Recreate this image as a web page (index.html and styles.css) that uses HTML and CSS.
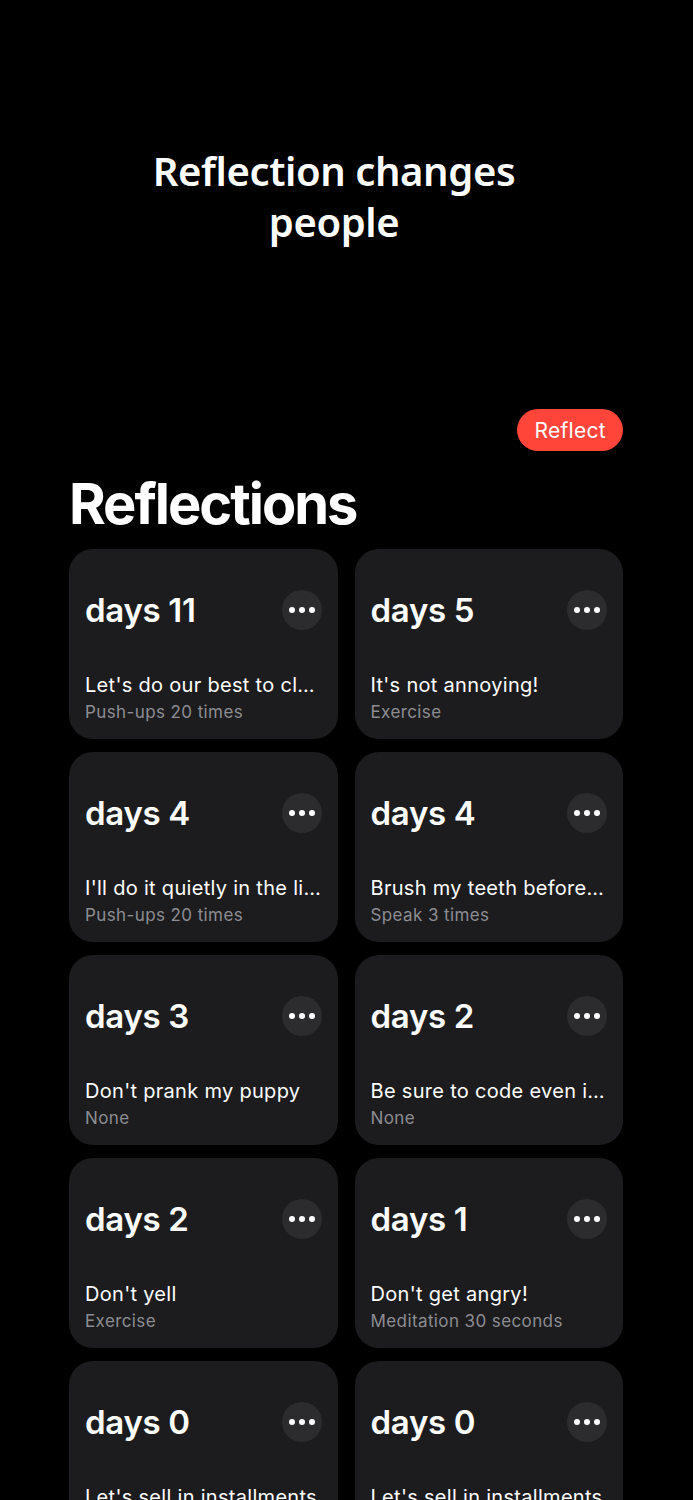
FILE: index.html
```html
<!DOCTYPE html>
<html lang="en">
<head>
<meta charset="utf-8">
<title>Reflections</title>
<link rel="stylesheet" href="styles.css">
</head>
<body>
<div class="page">
  <header class="hero">
    <h1 class="hero-title">Reflection changes people</h1>
  </header>
  <div class="actions">
    <button class="reflect-btn">Reflect</button>
  </div>
  <h2 class="section-title">Reflections</h2>
  <div class="grid">
    <div class="card">
      <div class="card-top"><span class="days">days 11</span><span class="more"><i></i><i></i><i></i></span></div>
      <div class="card-text"><div class="goal">Let's do our best to clean up every day</div><div class="sub">Push-ups 20 times</div></div>
    </div>
    <div class="card">
      <div class="card-top"><span class="days">days 5</span><span class="more"><i></i><i></i><i></i></span></div>
      <div class="card-text"><div class="goal">It's not annoying!</div><div class="sub">Exercise</div></div>
    </div>
    <div class="card">
      <div class="card-top"><span class="days">days 4</span><span class="more"><i></i><i></i><i></i></span></div>
      <div class="card-text"><div class="goal">I'll do it quietly in the library</div><div class="sub">Push-ups 20 times</div></div>
    </div>
    <div class="card">
      <div class="card-top"><span class="days">days 4</span><span class="more"><i></i><i></i><i></i></span></div>
      <div class="card-text"><div class="goal">Brush my teeth beforehand</div><div class="sub">Speak 3 times</div></div>
    </div>
    <div class="card">
      <div class="card-top"><span class="days">days 3</span><span class="more"><i></i><i></i><i></i></span></div>
      <div class="card-text"><div class="goal">Don't prank my puppy</div><div class="sub">None</div></div>
    </div>
    <div class="card">
      <div class="card-top"><span class="days">days 2</span><span class="more"><i></i><i></i><i></i></span></div>
      <div class="card-text"><div class="goal">Be sure to code even if I'm tired</div><div class="sub">None</div></div>
    </div>
    <div class="card">
      <div class="card-top"><span class="days">days 2</span><span class="more"><i></i><i></i><i></i></span></div>
      <div class="card-text"><div class="goal">Don't yell</div><div class="sub">Exercise</div></div>
    </div>
    <div class="card">
      <div class="card-top"><span class="days">days 1</span><span class="more"><i></i><i></i><i></i></span></div>
      <div class="card-text"><div class="goal">Don't get angry!</div><div class="sub">Meditation 30 seconds</div></div>
    </div>
    <div class="card">
      <div class="card-top"><span class="days">days 0</span><span class="more"><i></i><i></i><i></i></span></div>
      <div class="card-text"><div class="goal">Let's sell in installments</div><div class="sub">None</div></div>
    </div>
    <div class="card">
      <div class="card-top"><span class="days">days 0</span><span class="more"><i></i><i></i><i></i></span></div>
      <div class="card-text"><div class="goal">Let's sell in installments</div><div class="sub">None</div></div>
    </div>
  </div>
</div>
</body>
</html>
```

FILE: styles.css
```css
* { box-sizing: border-box; }
html, body {
  margin: 0;
  padding: 0;
  background: #000;
  color: #fff;
  font-family: Inter, "Liberation Sans", sans-serif;
}
.page {
  padding: 0 70px 40px 69px;
}
.hero {
  padding-top: 145px;
}
.hero-title {
  margin: 0 0 0 55px;
  width: 420px;
  text-align: center;
  font-family: "Noto Sans", "Open Sans", sans-serif;
  font-weight: 600;
  font-size: 40px;
  line-height: 51px;
  letter-spacing: -0.4px;
}
.actions {
  display: flex;
  justify-content: flex-end;
  margin-top: 162px;
}
.reflect-btn {
  height: 42px;
  padding: 0 17px;
  border: none;
  border-radius: 21px;
  background: #ff453a;
  color: #fff;
  font-family: Inter, "Liberation Sans", sans-serif;
  font-size: 21px;
  font-weight: 400;
  letter-spacing: 0.3px;
}
.section-title {
  margin: 20px 0 11px;
  font-size: 56px;
  line-height: 67px;
  font-weight: 700;
  letter-spacing: -2px;
}
.grid {
  display: grid;
  grid-template-columns: 1fr 1fr;
  column-gap: 17px;
  row-gap: 13px;
}
.card {
  height: 190px;
  background: #1c1c1e;
  border-radius: 24px;
  padding: 41px 16px 17px;
  display: flex;
  flex-direction: column;
  overflow: hidden;
}
.card-top {
  display: flex;
  align-items: center;
  justify-content: space-between;
  height: 40px;
}
.days {
  font-size: 33px;
  line-height: 40px;
  font-weight: 600;
  letter-spacing: -0.3px;
}
.more {
  width: 40px;
  height: 40px;
  border-radius: 50%;
  background: #2c2c2e;
  display: flex;
  align-items: center;
  justify-content: center;
  gap: 4px;
}
.more i {
  width: 6px;
  height: 6px;
  border-radius: 50%;
  background: #fff;
}
.card-text {
  margin-top: auto;
}
.goal {
  font-size: 20px;
  line-height: 24px;
  letter-spacing: 0.3px;
  white-space: nowrap;
  overflow: hidden;
  text-overflow: ellipsis;
  margin-bottom: 5px;
}
.sub {
  font-size: 17px;
  line-height: 20px;
  letter-spacing: 0.4px;
  color: #8d8d93;
  white-space: nowrap;
  overflow: hidden;
  text-overflow: ellipsis;
}
```
